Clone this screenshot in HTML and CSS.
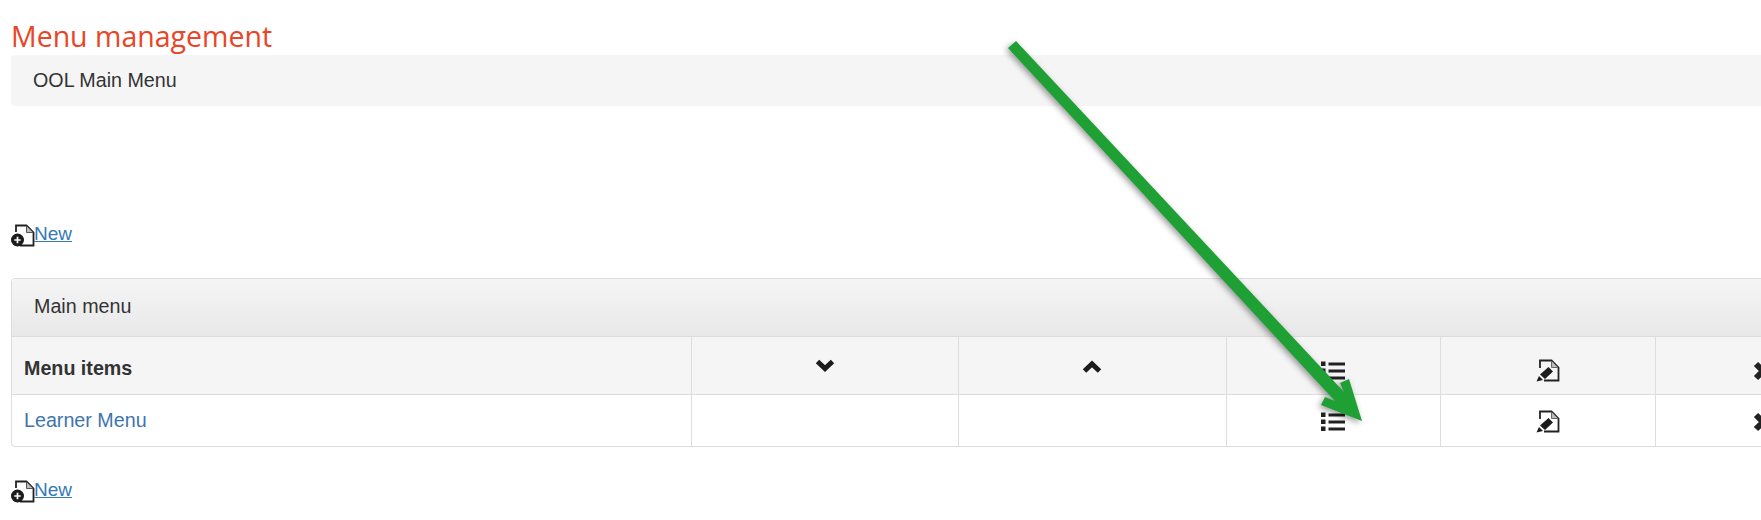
FILE: index.html
```html
<!DOCTYPE html>
<html lang="en">
<head>
    <meta charset="UTF-8">
    <meta name="viewport" content="width=device-width, initial-scale=1.0">
    <title>Menu management</title>
    <link rel="stylesheet" href="styles.css">
</head>
<body>
    <svg width="0" height="0" class="defs">
        <symbol id="icon-new" viewBox="0 0 24 23">
            <path d="M5 8V1.500H15.500L22.500 8.500V21.500H9" fill="none" stroke="#222" stroke-width="1.800"/>
            <path d="M15.500 2V8.500H22" fill="#bbb" stroke="#555" stroke-width="1"/>
            <circle cx="6.500" cy="16" r="6.500" fill="#1c1c1c"/>
            <path d="M3.300 16H9.700M6.500 12.800V19.200" stroke="#fff" stroke-width="1.700"/>
        </symbol>
        <symbol id="icon-edit" viewBox="0 0 24 23">
            <path d="M4 9V1.500H15.500L22.500 8.500V21.500H8" fill="none" stroke="#222" stroke-width="1.800"/>
            <path d="M15.500 2V8.500H22" fill="#bbb" stroke="#666" stroke-width="1"/>
            <path d="M12.500 8L17 12.500L9 20L4 15.500Z" fill="#1c1c1c"/>
            <path d="M3 17L7 21L0.500 22.500Z" fill="#1c1c1c"/>
        </symbol>
    </svg>

    <div class="page">
        <h1 class="title">Menu management</h1>
        <div class="well">OOL Main Menu</div>

        <p class="new-line new-top">
            <svg class="icon-new"><use href="#icon-new"/></svg><a href="#">New</a>
        </p>

        <div class="panel">
            <div class="panel-heading">Main menu</div>
            <table class="menu-table">
                <colgroup>
                    <col class="col-name">
                    <col class="col-move">
                    <col class="col-move">
                    <col class="col-act">
                    <col class="col-act">
                    <col class="col-act">
                </colgroup>
                <tr class="head-row">
                    <th>Menu items</th>
                    <td class="chev-cell"><svg class="icon-chev" viewBox="0 0 20 14"><path d="M2.500 2.500L10 9.500L17.500 2.500" fill="none" stroke="#1c1c1c" stroke-width="5"/></svg></td>
                    <td class="chev-cell"><svg class="icon-chev" viewBox="0 0 20 14"><path d="M2.500 12L10 5L17.500 12" fill="none" stroke="#1c1c1c" stroke-width="5"/></svg></td>
                    <td class="icon-cell"><svg class="icon-list" viewBox="0 0 24 19"><path d="M0 0.500H4.500V5H0ZM0 7.500H4.500V12H0ZM0 14.500H4.500V19H0Z" fill="#222"/><path d="M7.500 3H24M7.500 10H24M7.500 17H24" stroke="#222" stroke-width="3"/></svg></td>
                    <td class="icon-cell"><svg class="icon-edit"><use href="#icon-edit"/></svg></td>
                    <td class="icon-cell"><svg class="icon-x" viewBox="0 0 20 20"><path d="M3 3L17 17M17 3L3 17" stroke="#222" stroke-width="6"/></svg></td>
                </tr>
                <tr class="item-row">
                    <td class="name-cell"><a class="plain-link" href="#">Learner Menu</a></td>
                    <td></td>
                    <td></td>
                    <td class="icon-cell"><svg class="icon-list" viewBox="0 0 24 19"><path d="M0 0.500H4.500V5H0ZM0 7.500H4.500V12H0ZM0 14.500H4.500V19H0Z" fill="#222"/><path d="M7.500 3H24M7.500 10H24M7.500 17H24" stroke="#222" stroke-width="3"/></svg></td>
                    <td class="icon-cell"><svg class="icon-edit"><use href="#icon-edit"/></svg></td>
                    <td class="icon-cell"><svg class="icon-x" viewBox="0 0 20 20"><path d="M3 3L17 17M17 3L3 17" stroke="#222" stroke-width="6"/></svg></td>
                </tr>
            </table>
        </div>

        <p class="new-line">
            <svg class="icon-new"><use href="#icon-new"/></svg><a href="#">New</a>
        </p>
    </div>

    <!-- annotation drawn on top of the screenshot -->
    <svg class="arrow" width="1761" height="520" viewBox="0 0 1761 520">
        <polygon points="1016,41 1344,392 1340,383 1349,379 1362,421 1321,405 1325,397 1335,401 1008,48" fill="#1fa035"/>
    </svg>
</body>
</html>
```

FILE: styles.css
```css
html, body {
    margin: 0;
    padding: 0;
    background: #fff;
    overflow: hidden;
    height: 520px;
}
body {
    font-family: "Liberation Sans", Arial, sans-serif;
    font-size: 19.700px;
    color: #333;
    position: relative;
}
.defs { position: absolute; }
.page {
    width: 1859px;
    padding: 0 0 0 11px;
}
.title {
    margin: 0;
    padding-top: 18px;
    font-family: "Open Sans", sans-serif;
    font-size: 28.500px;
    font-weight: 400;
    line-height: 37px;
    color: #ea4526;
}
.well {
    height: 51px;
    line-height: 50px;
    padding-left: 22px;
    background: #f5f5f5;
    border-radius: 4px;
}
.new-line {
    margin: 0;
    height: 24px;
    line-height: 20px;
    display: flex;
    align-items: flex-start;
}
.new-top { margin-top: 118px; }
.new-line a { color: #337ab7; font-size: 19px; margin-left: -1px; }
.icon-new {
    width: 24px;
    height: 23px;
    flex: none;
}
.panel {
    margin: 30px 0 33px;
    border: 1px solid #ddd;
    border-radius: 4px;
    overflow: hidden;
}
.panel-heading {
    height: 57px;
    line-height: 55px;
    padding-left: 22px;
    background: linear-gradient(#f5f5f5, #e8e8e8);
    border-bottom: 1px solid #ddd;
}
.menu-table {
    width: 100%;
    table-layout: fixed;
    border-collapse: collapse;
}
.col-name { width: 679px; }
.col-move { width: 267.500px; }
.col-act { width: 214.500px; }
.menu-table th,
.menu-table td {
    padding: 0;
    border-left: 1px solid #ddd;
    text-align: center;
    vertical-align: middle;
}
.menu-table th,
.menu-table .name-cell {
    border-left: none;
    text-align: left;
    padding-left: 12px;
}
.menu-table th { padding-top: 6px; }
.item-row { height: 52px; }
.head-row {
    height: 57px;
    background: #f5f5f5;
    border-bottom: 1px solid #ddd;
}
.head-row .icon-cell { padding-top: 11px; }
.head-row .chev-cell { padding-top: 2px; }
.item-row .icon-cell { padding-top: 3px; }
.plain-link { color: #3e74ad; text-decoration: none; }
.icon-chev, .icon-list, .icon-edit, .icon-x {
    display: block;
    margin: 0 auto;
}
.icon-chev { width: 20px; height: 14px; }
.icon-list { width: 24px; height: 19px; }
.icon-edit { width: 24px; height: 23px; }
.icon-x { width: 20px; height: 20px; }
.arrow {
    position: absolute;
    top: 0;
    left: 0;
    filter: drop-shadow(-2px 2px 3px rgba(0, 0, 0, 0.4));
}
```
